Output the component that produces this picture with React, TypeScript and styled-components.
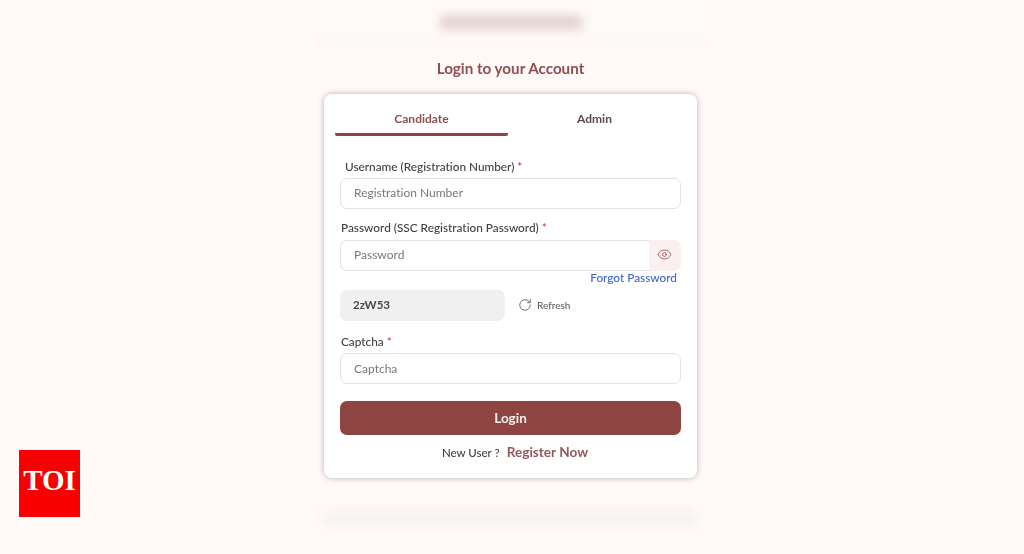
import { Eye, RotateCw } from 'lucide-react';
import React from 'react';
import styled, { createGlobalStyle } from 'styled-components';

const MAROON = '#8e4440';
const FONT = '"Lato", "Open Sans", "Liberation Sans", sans-serif';

const GlobalStyle = createGlobalStyle`
  html, body {
    margin: 0;
    padding: 0;
    background: #fffaf8;
  }
  * {
    box-sizing: border-box;
  }
`;

const Page = styled.div`
  position: relative;
  width: 1024px;
  height: 554px;
  overflow: hidden;
  padding-left: 315px;
  background: #fffaf8;
  font-family: ${FONT};
  font-variant-ligatures: none;
`;

const Column = styled.main`
  width: 391px;
  display: flex;
  flex-direction: column;
  align-items: center;
`;

const TopBand = styled.div`
  width: 100%;
  height: 49px;
  display: flex;
  justify-content: center;
  padding-top: 15px;
  background: linear-gradient(#fffaf8 0, #fefaf8 60%, #fdf8f6 100%);
`;

const BlurredHeading = styled.div`
  width: 142px;
  height: 15px;
  background: #e3d3cf;
  filter: blur(5px);
`;

const Title = styled.h1`
  margin: 10px 0 0;
  height: 35px;
  width: 100%;
  text-align: center;
  font-size: 15.2px;
  line-height: 19px;
  font-weight: 700;
  color: #8f4f4e;
  filter: blur(0.3px);
`;

const Card = styled.section`
  width: 373px;
  height: 384px;
  background: #fff;
  border-radius: 8px;
  box-shadow: 0 0 6px rgba(0, 0, 0, 0.28);
  padding: 8px 16px 0;
  filter: blur(0.3px);
`;

const Tabs = styled.div`
  display: flex;
  margin: 0 0 0 -5px;
  width: 346px;
`;

const Tab = styled.div<{ $active?: boolean }>`
  flex: 1;
  height: 34px;
  line-height: 33px;
  text-align: center;
  font-size: 12px;
  font-weight: 700;
  color: ${(props) => (props.$active ? '#8f4f4e' : '#5a4a4a')};
  border-bottom: 3px solid ${(props) => (props.$active ? MAROON : 'transparent')};
  border-radius: 2px;
`;

const Label = styled.label<{ $indent?: boolean; $top: number }>`
  display: block;
  margin-top: ${(props) => props.$top}px;
  padding-left: ${(props) => (props.$indent ? 5 : 1)}px;
  font-size: 11.8px;
  line-height: 16px;
  font-weight: 500;
  color: #434040;
`;

const Required = styled.span`
  color: #e5303c;
`;

const Field = styled.input<{ $lowText?: boolean }>`
  display: block;
  width: 100%;
  height: 31px;
  margin-top: 3px;
  padding: 0 13px ${(props) => (props.$lowText ? 0 : 2)}px;
  border: 1px solid #e2e2e4;
  border-radius: 7px;
  background: #fff;
  outline: none;
  font-family: ${FONT};
  font-size: 12px;
  font-variant-ligatures: none;

  &::placeholder {
    color: #77787b;
    opacity: 1;
  }
`;

const InputGroup = styled.div`
  display: flex;
  height: 31px;
  margin-top: 4px;
`;

const GroupField = styled(Field)`
  flex: 1;
  margin-top: 0;
  border-right: none;
  border-radius: 7px 0 0 7px;
`;

const EyeAddon = styled.span`
  width: 32px;
  display: flex;
  align-items: center;
  justify-content: center;
  padding: 0 2px 2px 0;
  background: #f9f0ef;
  border-radius: 0 7px 7px 0;
  color: #a8605f;
`;

const ForgotRow = styled.div`
  height: 15px;
  padding-right: 4px;
  text-align: right;
  font-size: 11.8px;
  line-height: 13px;
  font-weight: 500;
  color: #3f66cf;
`;

const CaptchaRow = styled.div`
  display: flex;
  align-items: center;
  margin-top: 4px;
`;

const CaptchaCode = styled.div`
  width: 165px;
  height: 31px;
  padding-left: 13px;
  border-radius: 7px;
  background: #f0f0f0;
  font-size: 11.5px;
  line-height: 30px;
  font-weight: 700;
  color: #4a4a4a;
`;

const RefreshButton = styled.div`
  display: flex;
  align-items: center;
  gap: 5px;
  margin-left: 13px;
  padding-bottom: 2px;
  font-size: 10px;
  font-weight: 500;
  color: #5f5f5f;
`;

const LoginButton = styled.button`
  display: block;
  width: 100%;
  height: 34px;
  margin-top: 17px;
  padding: 0;
  border: none;
  border-radius: 7px;
  background: ${MAROON};
  color: #f8eeee;
  font-family: ${FONT};
  font-size: 13.5px;
  font-weight: 700;
`;

const RegisterRow = styled.p`
  margin: 9px 0 0;
  padding-left: 9px;
  text-align: center;
  font-size: 11.5px;
  line-height: 17px;
  font-weight: 500;
  color: #434040;
`;

const RegisterLink = styled.span`
  margin-left: 7px;
  font-size: 13.6px;
  font-weight: 700;
  color: #94585a;
`;

const BottomBand = styled.div`
  width: 100%;
  height: 32px;
  margin-top: 25px;
  background: linear-gradient(#fdf8f7, #f6f3f2 50%, #fffaf8);
  mask-image: linear-gradient(90deg, transparent, #000 4%, #000 96%, transparent);
`;

const Badge = styled.div`
  position: absolute;
  left: 19px;
  top: 450px;
  width: 61px;
  height: 67px;
  display: flex;
  align-items: center;
  justify-content: center;
  padding-bottom: 7px;
  background: #f80000;
  color: #fff;
  font-family: 'Liberation Serif', serif;
  font-size: 29px;
  font-weight: 700;
`;

export default function App() {
  return (
    <>
      <GlobalStyle />
      <Page>
        <Column>
          <TopBand>
            <BlurredHeading />
          </TopBand>
          <Title>Login to your Account</Title>
          <Card>
            <Tabs>
              <Tab $active>Candidate</Tab>
              <Tab>Admin</Tab>
            </Tabs>
            <Label $indent $top={23}>
              Username (Registration Number) <Required>*</Required>
            </Label>
            <Field placeholder="Registration Number" />
            <Label $top={11}>
              Password (SSC Registration Password) <Required>*</Required>
            </Label>
            <InputGroup>
              <GroupField placeholder="Password" />
              <EyeAddon>
                <Eye size={15} strokeWidth={1.6} />
              </EyeAddon>
            </InputGroup>
            <ForgotRow>Forgot Password</ForgotRow>
            <CaptchaRow>
              <CaptchaCode>2zW53</CaptchaCode>
              <RefreshButton>
                <RotateCw size={14} strokeWidth={1.5} />
                Refresh
              </RefreshButton>
            </CaptchaRow>
            <Label $top={13}>
              Captcha <Required>*</Required>
            </Label>
            <Field $lowText placeholder="Captcha" />
            <LoginButton type="button">Login</LoginButton>
            <RegisterRow>
              New User ?<RegisterLink>Register Now</RegisterLink>
            </RegisterRow>
          </Card>
          <BottomBand />
        </Column>
        <Badge>TOI</Badge>
      </Page>
    </>
  );
}
